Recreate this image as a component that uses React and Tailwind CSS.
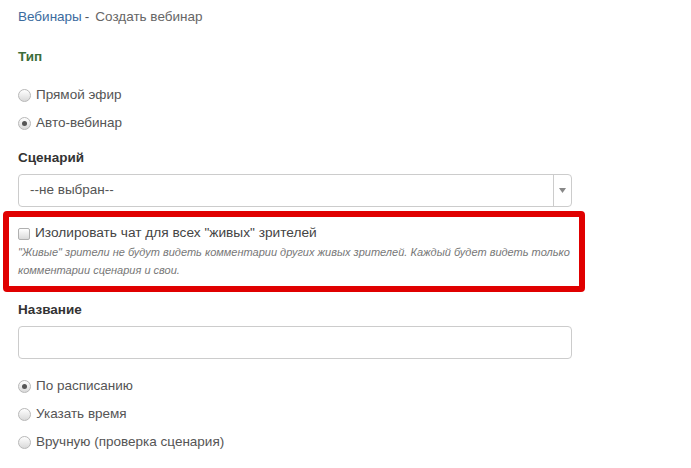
import React from "react";

function Radio({ checked, label }) {
  return (
    <label className="flex items-center h-[20px] text-[13.5px] text-[#555]">
      <span className="relative w-[13px] h-[13px] rounded-full border border-[#b8b8b8] bg-gradient-to-b from-white to-[#d9d9d9] flex items-center justify-center">
        {checked && <span className="w-[5px] h-[5px] rounded-full bg-[#555]" />}
      </span>
      <span className="ml-[5px]">{label}</span>
    </label>
  );
}

export default function App() {
  return (
    <div
      className="w-[691px] h-[468px] bg-white pl-[18px] overflow-hidden"
      style={{ fontFamily: '"Liberation Sans", Arial, sans-serif' }}
    >
      {/* breadcrumb */}
      <div className="h-[20px] mt-[7px] flex items-center text-[13.5px]">
        <a className="text-[#3b6b9e]">Вебинары</a>
        <span className="text-[#555] ml-[3px]">-</span>
        <span className="text-[#666] ml-[6px]">Создать вебинар</span>
      </div>

      <div className="h-[20px] mt-[20px] flex items-center text-[13.5px] font-bold text-[#3c6d3a]">
        Тип
      </div>

      <div className="mt-[18px] flex flex-col gap-[8px]">
        <Radio label="Прямой эфир" />
        <Radio checked label="Авто-вебинар" />
      </div>

      <div className="h-[20px] mt-[15px] flex items-center text-[13.5px] font-bold text-[#333]">
        Сценарий
      </div>

      <div className="mt-[6px] w-[554px] h-[33px] border border-[#ccc] rounded-[4px] flex">
        <div className="flex-1 flex items-center pl-[11px] text-[13.5px] text-[#555]">
          --не выбран--
        </div>
        <div className="w-[18px] border-l border-[#ccc] flex items-center justify-center">
          <svg width="7" height="5" viewBox="0 0 7 5">
            <path d="M0 0h7L3.5 5z" fill="#888" />
          </svg>
        </div>
      </div>

      {/* highlighted block */}
      <div className="mt-[4px] ml-[-15px] w-[582px] h-[81px] border-[6px] border-[#e00000] rounded-[4px] pl-[9px] pt-[7px]">
        <label className="flex items-center h-[19px] text-[13.7px] text-[#444]">
          <span className="w-[12px] h-[12px] rounded-[2px] border border-[#b0b0b0] bg-gradient-to-b from-white to-[#dadada]" />
          <span className="ml-[5px]">Изолировать чат для всех "живых" зрителей</span>
        </label>
        <p className="w-[560px] text-[11px] leading-[18px] italic text-[#777]">
          "Живые" зрители не будут видеть комментарии других живых зрителей. Каждый будет видеть только
          <br />
          комментарии сценария и свои.
        </p>
      </div>

      <div className="h-[20px] mt-[8px] flex items-center text-[13.5px] font-bold text-[#333]">
        Название
      </div>

      <div className="mt-[6px] w-[554px] h-[33px] border border-[#ccc] rounded-[4px]" />

      <div className="mt-[17px] flex flex-col gap-[8px]">
        <Radio checked label="По расписанию" />
        <Radio label="Указать время" />
        <Radio label="Вручную (проверка сценария)" />
      </div>
    </div>
  );
}
